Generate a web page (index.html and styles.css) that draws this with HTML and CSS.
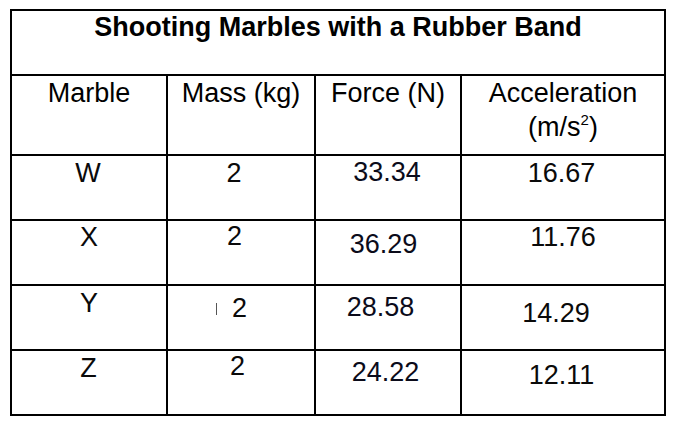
FILE: index.html
```html
<!DOCTYPE html>
<html lang="en">
<head>
<meta charset="utf-8">
<title>Shooting Marbles with a Rubber Band</title>
<link rel="stylesheet" href="styles.css">
</head>
<body>
<div class="sheet">
  <div class="grid">
    <div class="cell title">Shooting Marbles with a Rubber Band</div>

    <div class="cell head">Marble</div>
    <div class="cell head">Mass (kg)</div>
    <div class="cell head">Force (N)</div>
    <div class="cell head">Acceleration<br>(m/s<sup>2</sup>)</div>

    <div class="cell w-name">W</div>
    <div class="cell w-mass">2</div>
    <div class="cell w-force">33.34</div>
    <div class="cell w-acc">16.67</div>

    <div class="cell x-name">X</div>
    <div class="cell x-mass">2</div>
    <div class="cell x-force">36.29</div>
    <div class="cell x-acc">11.76</div>

    <div class="cell y-name">Y</div>
    <div class="cell y-mass"><span class="tick"></span>2</div>
    <div class="cell y-force">28.58</div>
    <div class="cell y-acc">14.29</div>

    <div class="cell z-name">Z</div>
    <div class="cell z-mass">2</div>
    <div class="cell z-force">24.22</div>
    <div class="cell z-acc">12.11</div>
  </div>
</div>
</body>
</html>
```

FILE: styles.css
```css
html, body {
  margin: 0;
  padding: 0;
  background: #ffffff;
}

.sheet {
  padding: 9px 0 0 10px;
}

.grid {
  display: grid;
  grid-template-columns: 154px 146px 144px 202px;
  grid-template-rows: 63px 78px 63px 63px 63px 63px;
  gap: 2px;
  padding: 2px;
  background: #000000;
  width: fit-content;
}

.cell {
  background: #ffffff;
  color: #0a0a0a;
  font-family: "Liberation Sans", Arial, sans-serif;
  font-size: 27px;
  line-height: 31px;
  text-align: center;
  box-sizing: border-box;
}

.title {
  grid-column: 1 / -1;
  font-weight: bold;
  color: #000000;
  padding-top: 1px;
}

.head {
  line-height: 34px;
  color: #000000;
}

.head sup {
  font-size: 15px;
  line-height: 0;
  vertical-align: 11px;
}

/* row W */
.w-name  { padding-top: 2px; padding-right: 2px; }
.w-mass  { padding-top: 2px; padding-right: 14px; }
.w-force { padding-top: 1px; padding-right: 2px; color: #0b0b1a; }
.w-acc   { padding-top: 2px; padding-right: 3px; }

/* row X */
.x-name  { padding-top: 1px; }
.x-mass  { padding-top: 0; padding-right: 13px; }
.x-force { padding-top: 8px; padding-right: 9px; color: #0b0b1a; }
.x-acc   { padding-top: 1px; }

/* row Y */
.y-name  { padding-top: 2px; }
.y-mass  { padding-top: 7px; padding-right: 19px; }
.y-force { padding-top: 6px; padding-right: 15px; color: #0b0b1a; }
.y-acc   { padding-top: 12px; padding-right: 14px; }

/* row Z */
.z-name  { padding-top: 2px; padding-right: 1px; }
.z-mass  { padding-top: 0; padding-right: 7px; }
.z-force { padding-top: 6px; padding-right: 5px; color: #0b0b1a; }
.z-acc   { padding-top: 9px; padding-right: 3px; }

.tick {
  display: inline-block;
  width: 1px;
  height: 12px;
  background: #555555;
  margin-right: 15px;
  vertical-align: 2px;
}
```
